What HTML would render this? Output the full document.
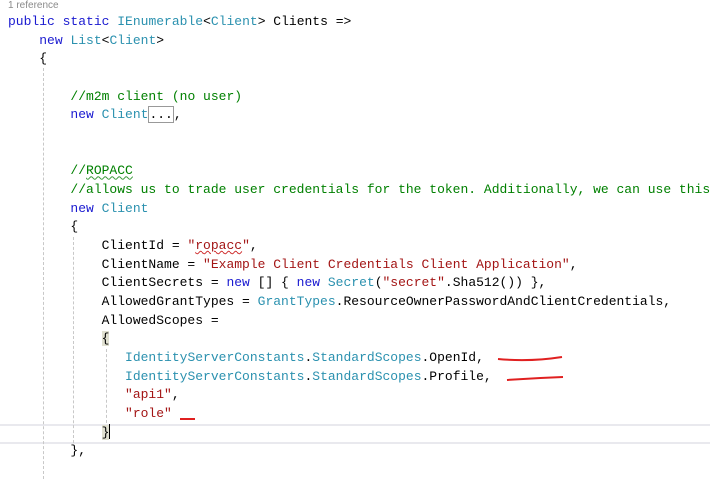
<!DOCTYPE html>
<html><head><meta charset="utf-8"><style>
html,body{margin:0;padding:0;background:#fff;width:710px;height:479px;overflow:hidden;position:relative}
.ref{position:absolute;left:8px;top:0px;font:10px "Liberation Sans",sans-serif;color:#8a8a8a}
pre{position:absolute;left:8px;top:13px;margin:0;font:13px/18.67px "Liberation Mono",monospace;color:#000;white-space:pre}
.k{color:#1a1ad0}.t{color:#2b91af}.c{color:#008000}.s{color:#a31515}
.g{position:absolute;width:0;border-left:1px dashed #c8c8c8}
.hl{position:absolute;left:0;width:710px;top:424px;height:16px;border-top:2px solid #e9e9ee;border-bottom:2px solid #e9e9ee}
.box{border:1px solid #999;}
.br{background:#e0e0d0}
.sq{text-decoration:underline wavy #3a9a3a;text-decoration-thickness:1px}
.sr{text-decoration:underline wavy #d03030;text-decoration-thickness:1px}
.cur{display:inline-block;width:1px;height:15px;background:#000;vertical-align:-3px}
</style></head><body>
<div class="hl"></div>
<div class="ref">1 reference</div>
<div class="g" style="left:43px;top:68px;height:411px"></div>
<div class="g" style="left:73px;top:237px;height:206px"></div>
<div class="g" style="left:106px;top:349px;height:74px"></div>
<pre><span class="k">public</span> <span class="k">static</span> <span class="t">IEnumerable</span>&lt;<span class="t">Client</span>&gt; Clients =&gt;
    <span class="k">new</span> <span class="t">List</span>&lt;<span class="t">Client</span>&gt;
    {

        <span class="c">//m2m client (no user)</span>
        <span class="k">new</span> <span class="t">Client</span><span class="box">...</span>,


        <span class="c">//<span class="sq">ROPACC</span></span>
        <span class="c">//allows us to trade user credentials for the token. Additionally, we can use this</span>
        <span class="k">new</span> <span class="t">Client</span>
        {
            ClientId = <span class="s">"<span class="sr">ropacc</span>"</span>,
            ClientName = <span class="s">"Example Client Credentials Client Application"</span>,
            ClientSecrets = <span class="k">new</span> [] { <span class="k">new</span> <span class="t">Secret</span>(<span class="s">"secret"</span>.Sha512()) },
            AllowedGrantTypes = <span class="t">GrantTypes</span>.ResourceOwnerPasswordAndClientCredentials,
            AllowedScopes =
            <span class="br">{</span>
               <span class="t">IdentityServerConstants</span>.<span class="t">StandardScopes</span>.OpenId,
               <span class="t">IdentityServerConstants</span>.<span class="t">StandardScopes</span>.Profile,
               <span class="s">"api1"</span>,
               <span class="s">"role"</span>
            <span class="br">}</span><span class="cur"></span>
        },</pre>
<svg style="position:absolute;left:0;top:0" width="710" height="479">
<path d="M498 359 Q530 362 562 357" stroke="#e02020" stroke-width="2" fill="none"/>
<path d="M507 380 Q535 378 563 377" stroke="#e02020" stroke-width="2" fill="none"/>
<path d="M180 419 L195 419" stroke="#e02020" stroke-width="2" fill="none"/>
</svg>
</body></html>
